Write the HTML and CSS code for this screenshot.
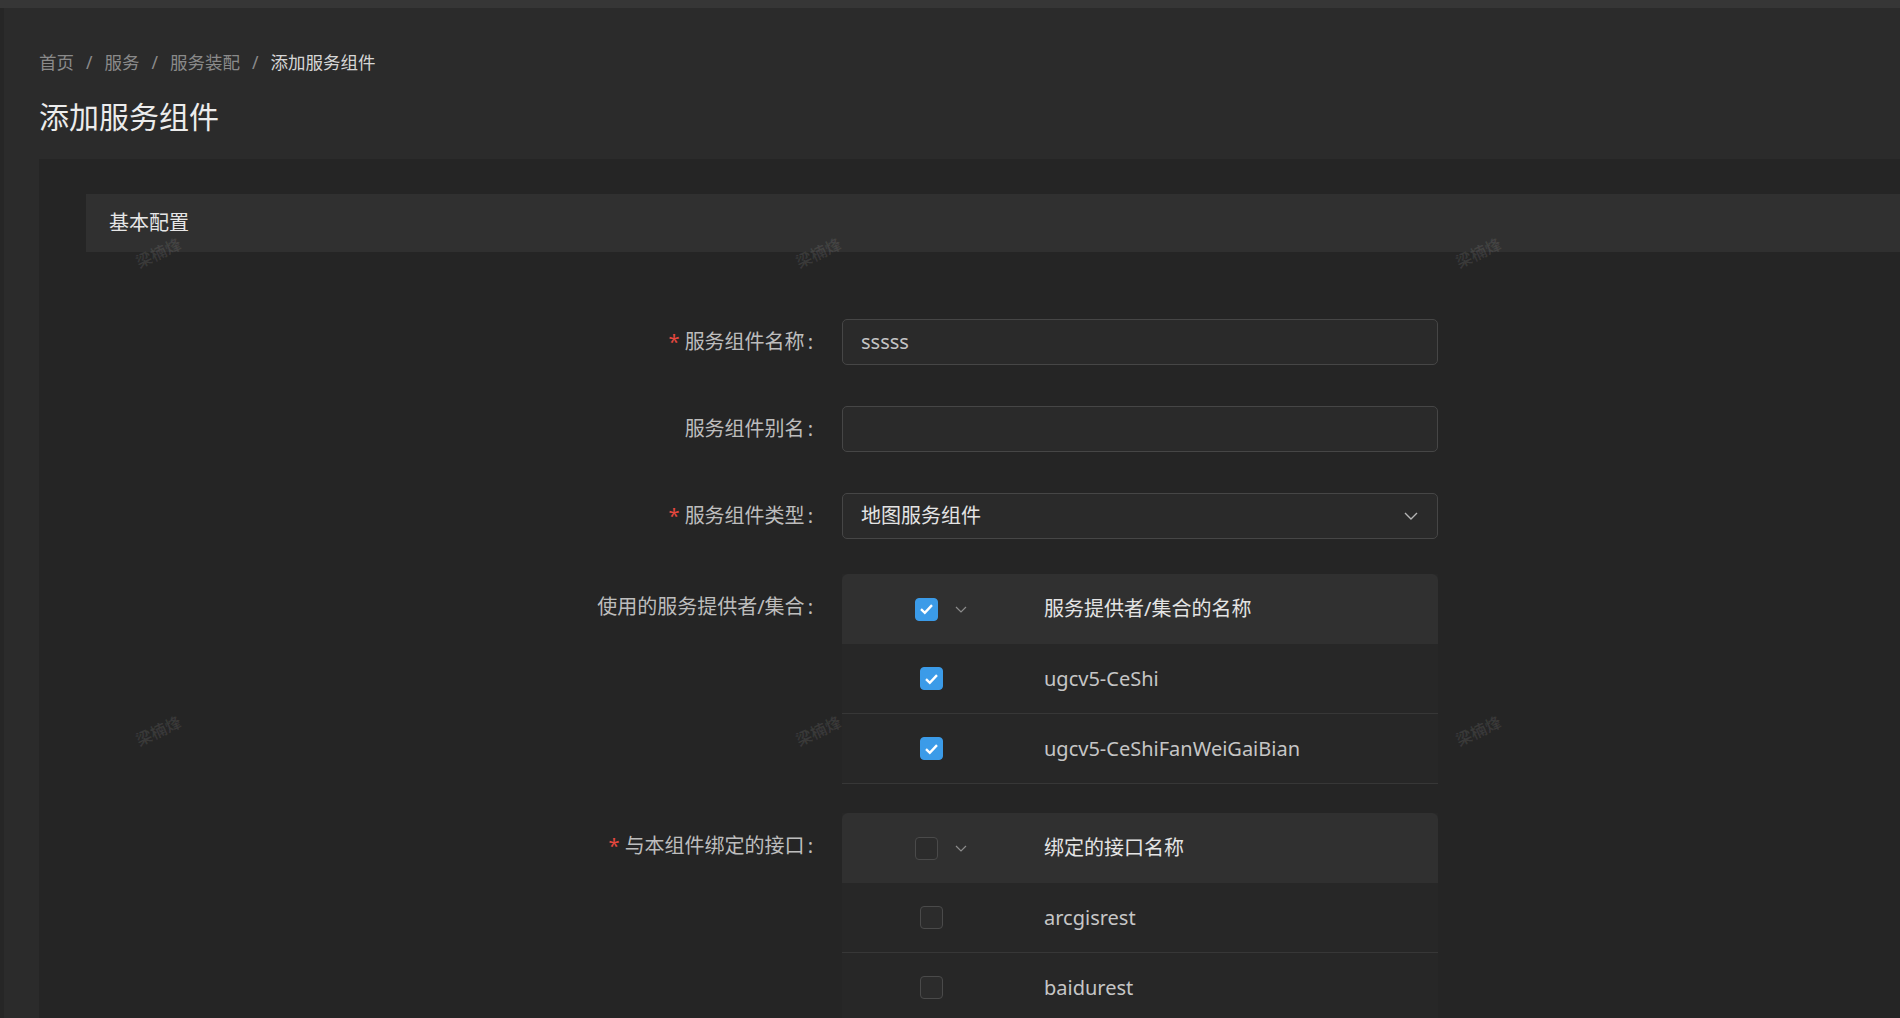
FILE: index.html
```html
<!DOCTYPE html>
<html lang="zh-CN">
<head>
<meta charset="utf-8">
<title>添加服务组件</title>
<link rel="stylesheet" href="styles.css">
</head>
<body>
<div class="topbar"></div>
<div class="page">
  <nav class="breadcrumb"><span class="crumb">首页</span><span class="sep">/</span><span class="crumb">服务</span><span class="sep">/</span><span class="crumb">服务装配</span><span class="sep">/</span><span class="crumb current">添加服务组件</span></nav>
  <h1 class="title">添加服务组件</h1>
  <div class="card">
    <div class="section-head">基本配置</div>
    <div class="form">
      <div class="form-item">
        <div class="label"><span class="req">*</span>服务组件名称<span class="colon">:</span></div>
        <div class="control"><div class="input">sssss</div></div>
      </div>
      <div class="form-item">
        <div class="label">服务组件别名<span class="colon">:</span></div>
        <div class="control"><div class="input"></div></div>
      </div>
      <div class="form-item item-select">
        <div class="label"><span class="req">*</span>服务组件类型<span class="colon">:</span></div>
        <div class="control">
          <div class="input select">
            <span class="select-value">地图服务组件</span>
            <svg class="select-arrow" width="14" height="10" viewBox="0 0 14 10"><path d="M1 2 L7 8 L13 2" fill="none" stroke="#b5b5b5" stroke-width="1.4"/></svg>
          </div>
        </div>
      </div>
      <div class="form-item item-table">
        <div class="label label-top">使用的服务提供者/集合<span class="colon">:</span></div>
        <div class="control">
          <div class="table">
            <div class="thead">
              <div class="sel-head">
                <span class="checkbox checked"><svg width="15" height="12" viewBox="0 0 15 12"><path d="M2 6.2 L5.8 9.8 L13 2.2" fill="none" stroke="#fff" stroke-width="2.4"/></svg></span>
                <svg class="head-arrow" width="12" height="9" viewBox="0 0 12 9"><path d="M1 2 L6 7 L11 2" fill="none" stroke="#8c8c8c" stroke-width="1.2"/></svg>
              </div>
              <div class="th">服务提供者/集合的名称</div>
            </div>
            <div class="row">
              <div class="sel-cell"><span class="checkbox checked"><svg width="15" height="12" viewBox="0 0 15 12"><path d="M2 6.2 L5.8 9.8 L13 2.2" fill="none" stroke="#fff" stroke-width="2.4"/></svg></span></div>
              <div class="td">ugcv5-CeShi</div>
            </div>
            <div class="row">
              <div class="sel-cell"><span class="checkbox checked"><svg width="15" height="12" viewBox="0 0 15 12"><path d="M2 6.2 L5.8 9.8 L13 2.2" fill="none" stroke="#fff" stroke-width="2.4"/></svg></span></div>
              <div class="td">ugcv5-CeShiFanWeiGaiBian</div>
            </div>
          </div>
        </div>
      </div>
      <div class="form-item item-table">
        <div class="label label-top"><span class="req">*</span>与本组件绑定的接口<span class="colon">:</span></div>
        <div class="control">
          <div class="table">
            <div class="thead">
              <div class="sel-head">
                <span class="checkbox"></span>
                <svg class="head-arrow" width="12" height="9" viewBox="0 0 12 9"><path d="M1 2 L6 7 L11 2" fill="none" stroke="#8c8c8c" stroke-width="1.2"/></svg>
              </div>
              <div class="th">绑定的接口名称</div>
            </div>
            <div class="row">
              <div class="sel-cell"><span class="checkbox"></span></div>
              <div class="td">arcgisrest</div>
            </div>
            <div class="row">
              <div class="sel-cell"><span class="checkbox"></span></div>
              <div class="td">baidurest</div>
            </div>
          </div>
        </div>
      </div>
    </div>
  </div>
  <div class="watermarks">
    <span>梁楠烽</span><span>梁楠烽</span><span>梁楠烽</span>
    <span>梁楠烽</span><span>梁楠烽</span><span>梁楠烽</span>
  </div>
</div>
</body>
</html>
```
FILE: styles.css
```css
* { box-sizing: border-box; }
html, body { margin: 0; height: 100%; }
body {
  background: #2b2b2b;
  font-family: "Noto Sans", "Noto Sans CJK SC", sans-serif;
  overflow: hidden;
}
.topbar { height: 8px; background: #363636; }
.page {
  position: relative;
  height: calc(100% - 8px);
  border-left: 4px solid #262626;
  padding-left: 35px;
  overflow: hidden;
}
.breadcrumb {
  padding-top: 42px;
  font-size: 17.5px;
  line-height: 24px;
  color: #8a8a8a;
  white-space: nowrap;
}
.crumb { color: #8a8a8a; }
.crumb.current { color: #d6d6d6; }
.sep { margin: 0 12px; color: #8a8a8a; }
.title {
  margin: 23px 0 0;
  font-size: 30px;
  line-height: 40px;
  font-weight: 400;
  color: #ececec;
}
.card {
  margin-top: 22px;
  background: #252525;
  padding: 35px 0 0 47px;
  min-height: 859px;
}
.section-head {
  height: 58px;
  line-height: 58px;
  padding-left: 23px;
  background: #303030;
  font-size: 20px;
  color: #e6e6e6;
}
.form { padding-top: 67px; }
.form-item { display: flex; margin-bottom: 41px; }
.form-item.item-select { margin-bottom: 35px; }
.form-item.item-table { margin-bottom: 29px; }
.label {
  flex: 0 0 727px;
  text-align: right;
  font-size: 20px;
  line-height: 46px;
  color: #bdbdbd;
  white-space: nowrap;
}
.label-top { padding-top: 10px; }
.req { color: #e5483f; margin-right: 5px; }
.colon { margin-left: 3px; }
.control { margin-left: 29px; width: 596px; flex: 0 0 596px; }
.input {
  height: 46px;
  border: 1px solid #464646;
  border-radius: 5px;
  background: #2a2a2a;
  padding: 0 18px;
  font-size: 20px;
  line-height: 44px;
  color: #c4c4c4;
  display: flex;
  align-items: center;
  justify-content: space-between;
}
.select { padding-right: 19px; }
.select-value { color: #e4e4e4; }
.table { width: 596px; background: #272727; }
.thead {
  display: flex;
  align-items: center;
  height: 70px;
  background: #303030;
  border-radius: 6px 6px 0 0;
}
.sel-head {
  flex: 0 0 202px;
  display: flex;
  align-items: center;
  gap: 17px;
  padding-left: 73px;
}
.head-arrow { display: block; }
.th { font-size: 20px; color: #e4e4e4; line-height: 28px; }
.row {
  display: flex;
  align-items: center;
  height: 70px;
  border-bottom: 1px solid #373737;
}
.sel-cell { flex: 0 0 202px; padding-left: 78px; display: flex; }
.td { font-size: 20px; color: #c6c6c6; line-height: 28px; }
.checkbox {
  display: flex;
  align-items: center;
  justify-content: center;
  width: 23px;
  height: 23px;
  border-radius: 4px;
  border: 1px solid #4a4a4a;
  background: #2c2c2c;
}
.checkbox.checked { background: #3b9be8; border-color: #3b9be8; }
.watermarks {
  position: absolute;
  left: -176px;
  top: 5px;
  display: grid;
  grid-template-columns: repeat(3, 660px);
  grid-auto-rows: 478px;
  place-items: center;
  pointer-events: none;
}
.watermarks span {
  font-size: 16px;
  font-weight: 700;
  color: rgba(255, 255, 255, 0.09);
  transform: rotate(-25deg);
  white-space: nowrap;
}
```
